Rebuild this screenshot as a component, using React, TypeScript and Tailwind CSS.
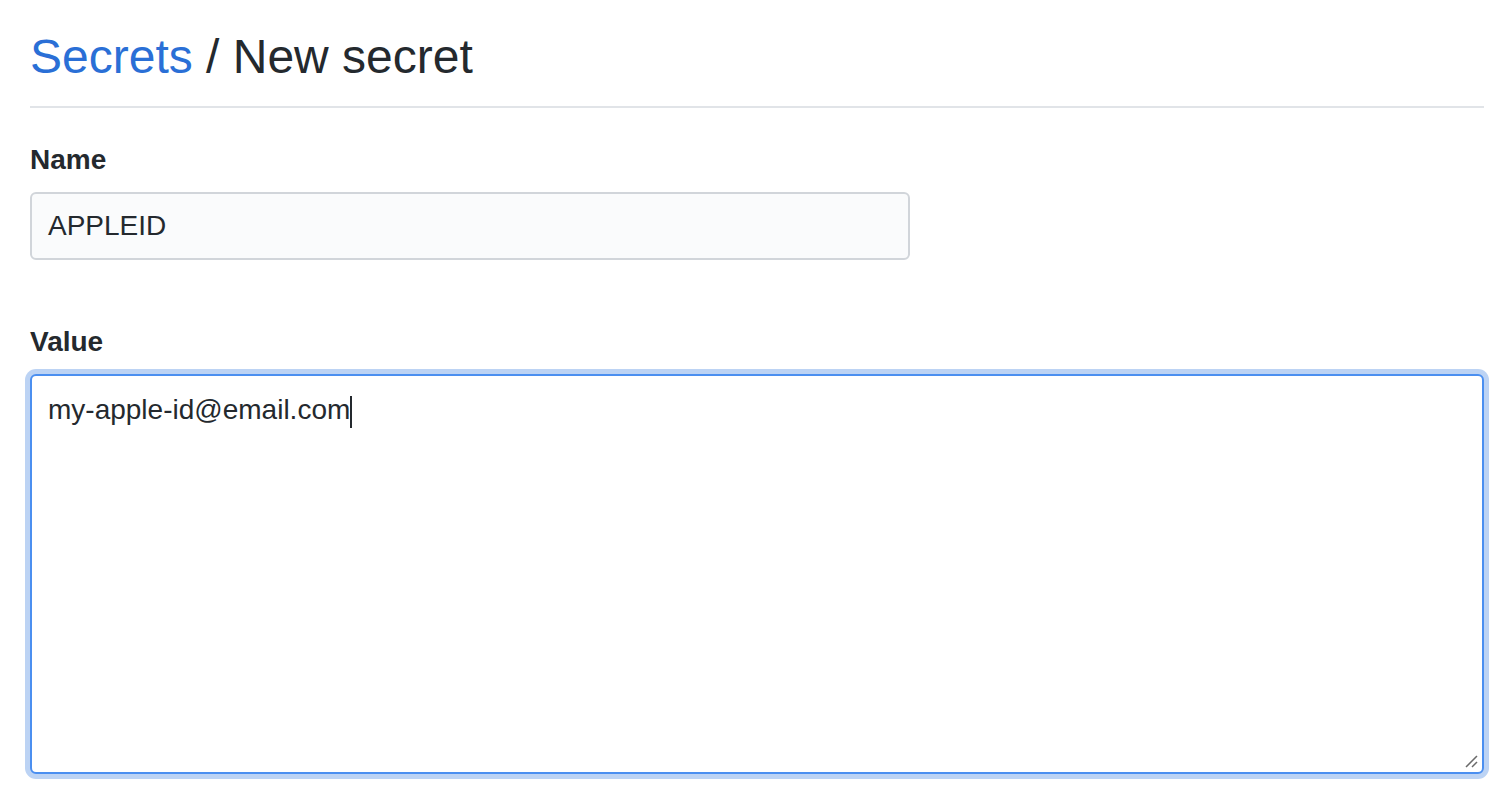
import React from "react";

export default function App() {
  return (
    <div
      className="w-[1504px] h-[796px] bg-white overflow-hidden pl-[30px] pr-[20px] pt-[27px]"
      style={{ fontFamily: '"Liberation Sans", Arial, sans-serif' }}
    >
      <div className="border-b-2 border-[#e1e4e8] pb-[19px]">
        <h1 className="text-[48px] leading-[60px] font-normal text-[#24292e]">
          <a className="text-[#2a6fd6]">Secrets</a> / New secret
        </h1>
      </div>
      <div className="mt-[34px]">
        <label className="block text-[28px] leading-[36px] font-bold text-[#24292e]">Name</label>
        <div className="mt-[14px] w-[880px] h-[68px] rounded-[6px] border-2 border-[#d1d5da] bg-[#fafbfc] flex items-center px-[16px] text-[28px] text-[#24292e]">
          APPLEID
        </div>
      </div>
      <div className="mt-[64px]">
        <label className="block text-[28px] leading-[36px] font-bold text-[#24292e]">Value</label>
        <div className="mt-[14px] relative h-[400px] rounded-[6px] border-2 border-[#4b8ff0] bg-white shadow-[0_0_0_5px_#bcd3f4] px-[16px] pt-[16px] text-[28px] leading-[36px] text-[#24292e]">
          <span>my-apple-id@email.com</span>
          <span className="inline-block w-[2px] h-[32px] bg-[#24292e] align-middle" />
          <svg className="absolute right-[4px] bottom-[4px]" width="14" height="14" viewBox="0 0 14 14">
            <line x1="2" y1="13" x2="13" y2="2" stroke="#6a6a6a" strokeWidth="1.5" />
            <line x1="8" y1="13" x2="13" y2="8" stroke="#6a6a6a" strokeWidth="1.5" />
          </svg>
        </div>
      </div>
    </div>
  );
}
